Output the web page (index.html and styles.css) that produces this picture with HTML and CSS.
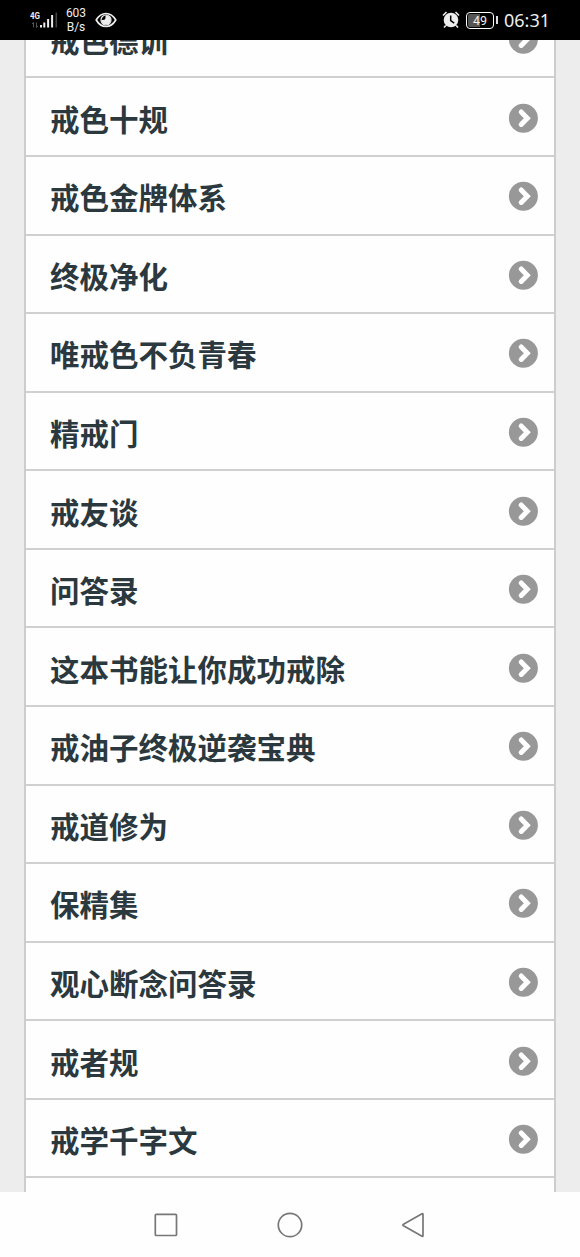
FILE: index.html
```html
<!DOCTYPE html>
<html lang="zh-CN">
<head>
<meta charset="utf-8">
<title>戒色</title>
<link rel="stylesheet" href="styles.css">
</head>
<body>
<svg class="defs" width="0" height="0">
  <symbol id="go" viewBox="0 0 30 30">
    <circle cx="15.4" cy="15.200" r="14.5" fill="#999899"/>
    <path d="M13.200 9 19.300 15.200l-6.100 6.200" fill="none" stroke="#fff" stroke-width="5" stroke-linecap="round"/>
  </symbol>
</svg>
<header class="status">
  <svg class="signal" width="30" height="20" viewBox="0 0 30 20">
    <g stroke="#eee" stroke-width="2"><path d="M11 15v2.500"/><path d="M14.300 12.500v5"/><path d="M18.100 9v8.500"/><path d="M22.100 5v12.500"/></g>
    <path d="M26.300 2.500v15" stroke="#444" stroke-width="1.600"/>
    <path d="M3.500 17.500v-5l-1.500 1.500M6.500 12.500v5l1.500-1.500" fill="none" stroke="#555" stroke-width="1"/>
    <text x="0" y="8.500" class="net" textLength="10" lengthAdjust="spacingAndGlyphs">4G</text>
  </svg>
  <div class="speed"><span>603</span><span>B/s</span></div>
  <svg class="eye" width="22" height="16" viewBox="0 0 22 16">
    <path d="M1.200 8Q5 1.500 11 1.500T20.800 8Q17 14.500 11 14.500T1.200 8Z" fill="none" stroke="#eee" stroke-width="1.700" stroke-linejoin="round"/>
    <circle cx="11" cy="8" r="4.700" fill="#eee"/>
    <path d="M10.500 3V5.500A2.500 2.500 0 0 1 8 8H6A5 5 0 0 1 10.500 3Z" fill="#000"/>
    <circle cx="11" cy="8" r="5" fill="none" stroke="#eee" stroke-width="1.200"/>
  </svg>
  <svg class="alarm" width="18" height="18" viewBox="0 0 18 18">
    <circle cx="9" cy="9" r="7.300" fill="#eee"/>
    <path d="M1 4.500 4.500 1M17 4.500 13.500 1M3.800 14.500 2 16.500M14.200 14.500 16 16.500" stroke="#eee" stroke-width="1.600"/>
    <path d="M8.700 4.500v5l3.500 2.600" fill="none" stroke="#000" stroke-width="1.500"/>
  </svg>
  <div class="battery"><span>49</span></div>
  <i class="cap"></i>
  <time class="clock">06:31</time>
</header>
<main class="page">
  <ul class="list">
    <li><span>戒色德训</span><svg><use href="#go"/></svg></li>
    <li><span>戒色十规</span><svg><use href="#go"/></svg></li>
    <li><span>戒色金牌体系</span><svg><use href="#go"/></svg></li>
    <li><span>终极净化</span><svg><use href="#go"/></svg></li>
    <li><span>唯戒色不负青春</span><svg><use href="#go"/></svg></li>
    <li><span>精戒门</span><svg><use href="#go"/></svg></li>
    <li><span>戒友谈</span><svg><use href="#go"/></svg></li>
    <li><span>问答录</span><svg><use href="#go"/></svg></li>
    <li><span>这本书能让你成功戒除</span><svg><use href="#go"/></svg></li>
    <li><span>戒油子终极逆袭宝典</span><svg><use href="#go"/></svg></li>
    <li><span>戒道修为</span><svg><use href="#go"/></svg></li>
    <li><span>保精集</span><svg><use href="#go"/></svg></li>
    <li><span>观心断念问答录</span><svg><use href="#go"/></svg></li>
    <li><span>戒者规</span><svg><use href="#go"/></svg></li>
    <li><span>戒学千字文</span><svg><use href="#go"/></svg></li>
    <li></li>
  </ul>
</main>
<nav class="nav">
  <svg width="26" height="26" viewBox="0 0 26 26"><rect x="2.300" y="2.300" width="21.200" height="21.200" rx="1"/></svg>
  <svg width="26" height="26" viewBox="0 0 26 26"><circle cx="13" cy="13" r="11.700"/></svg>
  <svg width="26" height="26" viewBox="0 0 26 26"><path d="M21 1.800Q22 1.300 22 2.500V23.500Q22 24.700 21 24.200L2.500 13.800Q1.200 13 2.500 12.200Z"/></svg>
</nav>
</body>
</html>
```
FILE: styles.css
```css
* { box-sizing: border-box; }
body {
  margin: 0;
  height: 1257px;
  display: flex;
  flex-direction: column;
  overflow: hidden;
  background: #fefefe;
  font-family: "Noto Sans CJK SC", sans-serif;
}
.defs { display: block; height: 0; }
.status {
  height: 40px;
  flex: none;
  display: flex;
  align-items: center;
  padding: 0 29px 0 30px;
  background: #000;
  color: #eee;
}
.net { font: bold 9px Roboto, sans-serif; fill: #eee; }
.speed {
  width: 32px;
  margin-right: 3px;
  display: flex;
  flex-direction: column;
  align-items: center;
  font: 12px/14px Roboto, sans-serif;
}
.alarm { margin-left: auto; }
.battery {
  width: 28px;
  height: 17px;
  margin-left: 6px;
  padding: 1px;
  border: 1px solid #fff;
  border-radius: 4px;
  font: 12.500px/13px Roboto, sans-serif;
  text-align: center;
}
.battery span {
  display: block;
  height: 13px;
  border-radius: 2px;
  background: linear-gradient(90deg, #555 49%, #000 49%);
}
.cap { width: 2px; height: 8px; margin: 0 6px 0 2px; background: #ddd; }
.clock { width: 47px; font: 18px/20px "Noto Sans", sans-serif; white-space: nowrap; }
.page {
  height: 1152px;
  flex: none;
  overflow: hidden;
  padding: 0 24px;
  background: #ededed;
}
.list {
  list-style: none;
  margin: -40.100px 0 0;
  padding: 0;
  border: solid #cdcdcd;
  border-width: 0 2px;
  background: #fefefe;
}
.list li {
  height: 78.570px;
  display: flex;
  align-items: center;
  justify-content: space-between;
  padding: 2px 16px 0 24px;
  border-bottom: 2px solid #d0d0d0;
  color: #2b393f;
  font-size: 29.500px;
  font-weight: 700;
  line-height: 44px;
}
.list svg { width: 30px; height: 30px; flex: none; }
.nav {
  flex: 1;
  display: flex;
  justify-content: center;
  align-items: center;
  gap: 98px;
}
.nav svg { fill: none; stroke: #777; stroke-width: 1.700; }
```
